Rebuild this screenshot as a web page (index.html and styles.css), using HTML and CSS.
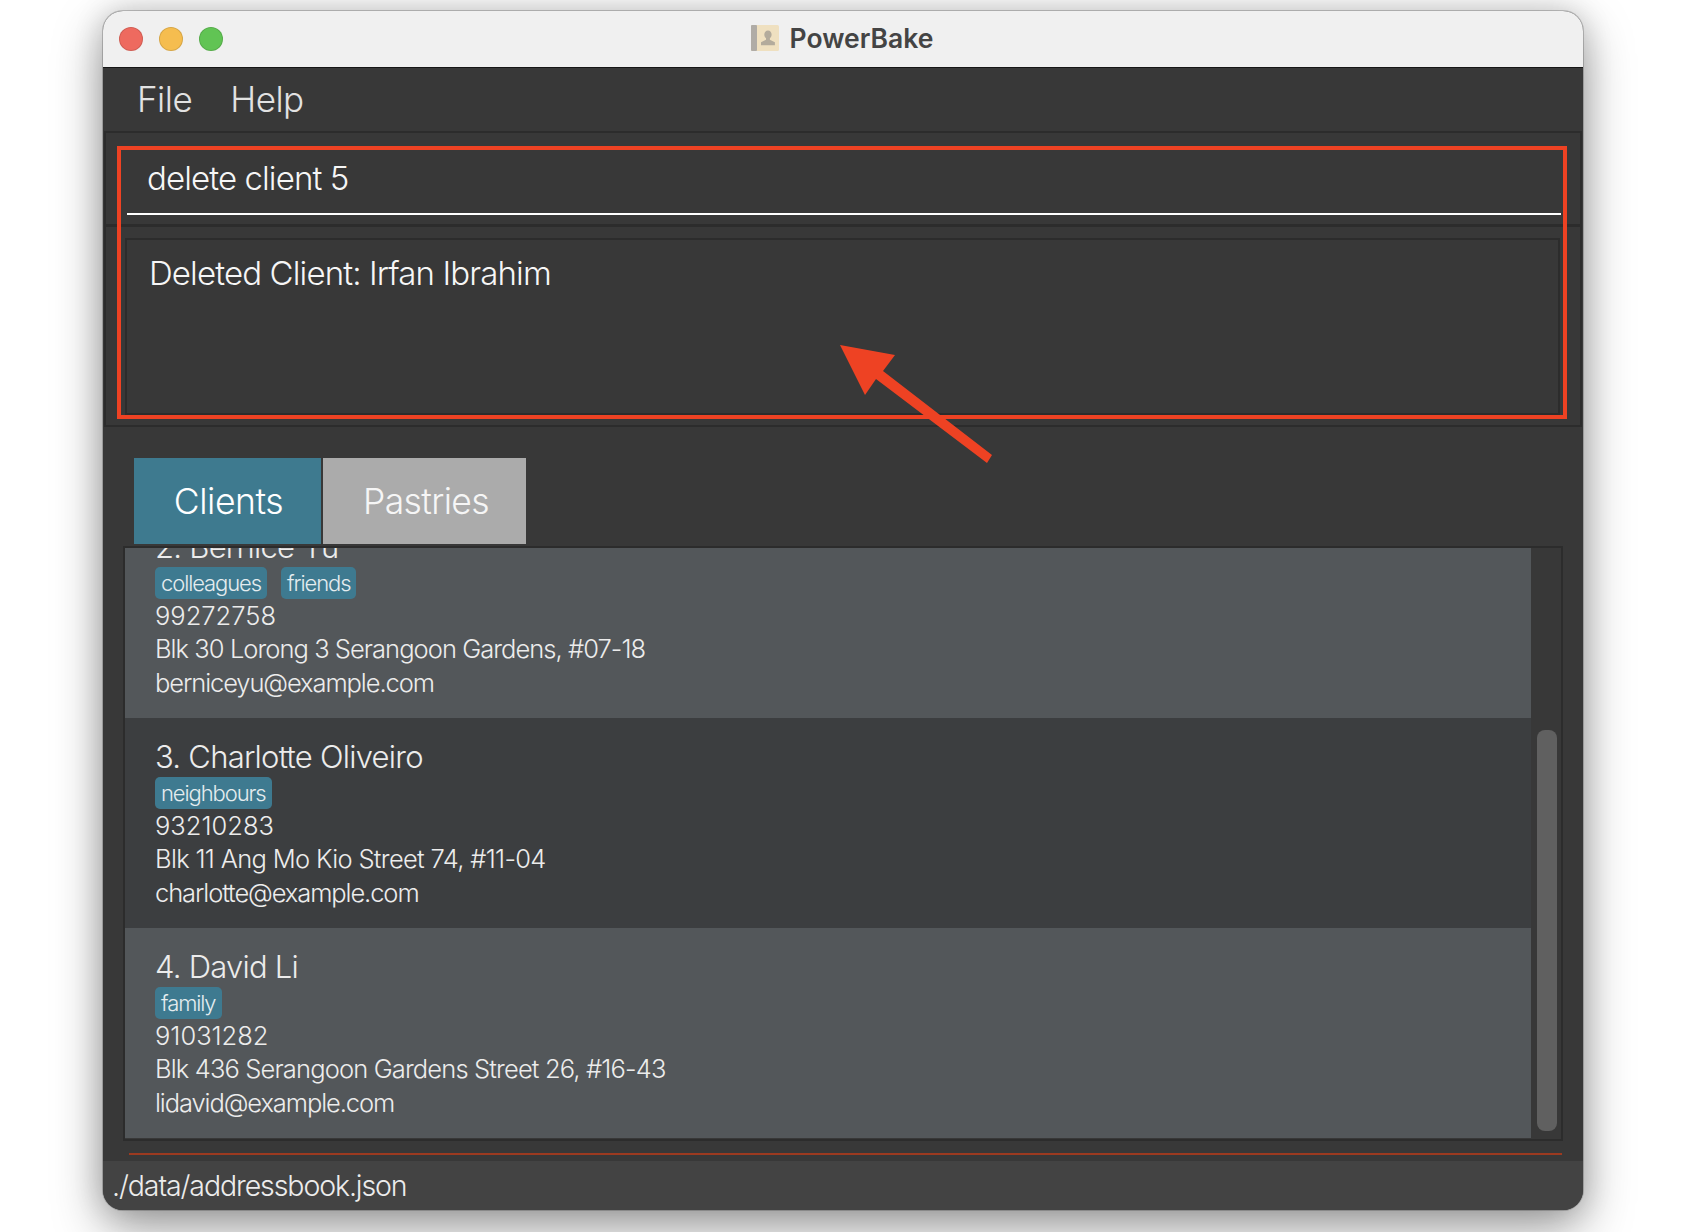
FILE: index.html
```html
<!DOCTYPE html>
<html lang="en">
<head>
<meta charset="utf-8">
<title>PowerBake</title>
<link rel="stylesheet" href="styles.css">
</head>
<body>
<div class="window">
  <header class="titlebar">
    <div class="lights">
      <span class="light light-red"></span>
      <span class="light light-yellow"></span>
      <span class="light light-green"></span>
    </div>
    <div class="title">
      <svg class="app-icon" width="28" height="26" viewBox="0 0 28 26">
        <rect x="0" y="0" width="28" height="26" rx="1.5" fill="#efe0c0"/>
        <rect x="0" y="0" width="6" height="26" rx="1" fill="#b0aca6"/>
        <path d="M17 5.5c2.2 0 3.6 1.8 3.6 4 0 1.6-.7 3-1.7 3.8v1.5l5 2.4v3H10v-3l5-2.4v-1.5c-1-.8-1.7-2.2-1.7-3.8 0-2.2 1.5-4 3.7-4z" fill="#b3ab9c"/>
      </svg>
      <span class="title-text">PowerBake</span>
    </div>
  </header>
  <nav class="menubar">
    <span class="menu-item">File</span>
    <span class="menu-item">Help</span>
  </nav>
  <section class="command">
    <div class="command-input">delete client 5</div>
  </section>
  <section class="result">
    <div class="result-box">Deleted Client: Irfan Ibrahim</div>
  </section>
  <main class="main">
    <div class="tabs">
      <div class="tab tab-active">Clients</div>
      <div class="tab tab-idle">Pastries</div>
    </div>
    <div class="list">
      <div class="rows">
        <article class="row row-light row-first">
          <div class="name">2. Bernice Yu</div>
          <div class="tags"><span class="tag">colleagues</span><span class="tag">friends</span></div>
          <div class="line phone">99272758</div>
          <div class="line address address-tight">Blk 30 Lorong 3 Serangoon Gardens, #07-18</div>
          <div class="line email">berniceyu@example.com</div>
        </article>
        <article class="row row-dark">
          <div class="name">3. Charlotte Oliveiro</div>
          <div class="tags"><span class="tag">neighbours</span></div>
          <div class="line phone">93210283</div>
          <div class="line address address-loose">Blk 11 Ang Mo Kio Street 74, #11-04</div>
          <div class="line email">charlotte@example.com</div>
        </article>
        <article class="row row-light">
          <div class="name">4. David Li</div>
          <div class="tags"><span class="tag">family</span></div>
          <div class="line phone">91031282</div>
          <div class="line address">Blk 436 Serangoon Gardens Street 26, #16-43</div>
          <div class="line email">lidavid@example.com</div>
        </article>
      </div>
      <div class="scrolltrack"><div class="thumb"></div></div>
    </div>
    <div class="redline"></div>
  </main>
  <footer class="status">./data/addressbook.json</footer>
  <div class="callout-box"></div>
  <svg class="callout-arrow" width="170" height="130" viewBox="0 0 170 130">
    <polygon points="0,0 55,10 43,26 152,110 147,118 36,34 25,50" fill="#ee4223"/>
  </svg>
</div>
</body>
</html>
```
FILE: styles.css
```css
* { box-sizing: border-box; }
html, body { margin: 0; padding: 0; background: #fff; }
body {
  width: 1688px;
  height: 1232px;
  overflow: hidden;
  padding: 11px 105px 22px 103px;
  font-family: Inter, "Noto Sans", sans-serif;
}
.window {
  position: relative;
  width: 1480px;
  height: 1199px;
  display: flex;
  flex-direction: column;
  background: #383838;
  border-radius: 20px;
  box-shadow: 0 0 0 1px rgba(60,60,60,.28), 0 18px 50px rgba(0,0,0,.38), 0 0 30px rgba(0,0,0,.16);
  overflow: hidden;
}
.titlebar {
  flex: none;
  height: 57px;
  background: #f0f0f0;
  border-bottom: 1px solid #161616;
  display: flex;
  align-items: center;
  justify-content: center;
  position: relative;
}
.lights {
  position: absolute;
  left: 16px;
  top: 16px;
  display: flex;
  gap: 16px;
}
.light {
  width: 24px;
  height: 24px;
  border-radius: 50%;
  border: 1px solid rgba(0,0,0,.12);
}
.light-red { background: #ee6a5f; }
.light-yellow { background: #f5bd4f; }
.light-green { background: #61c454; }
.title { display: flex; align-items: center; gap: 11px; padding: 0 2px 2px 0; }
.app-icon { display: block; }
.title-text { font-size: 26.5px; font-weight: 600; color: #444; line-height: 30px; }
.menubar {
  flex: none;
  height: 63px;
  display: flex;
  align-items: center;
  gap: 38px;
  padding: 0 34px 1px;
  font-size: 35px;
  letter-spacing: -.5px;
  color: #e2e2e2;
  font-weight: 350;
}
.command {
  flex: none;
  height: 96px;
  margin: 0 1px;
  border: 2px solid #2c2c2c;
  border-bottom-width: 3px;
  padding: 0 19px 0 21px;
}
.command-input {
  height: 82px;
  border-bottom: 2px solid #fff;
  padding: 24px 0 0 20px;
  font-size: 33px;
  font-weight: 340;
  letter-spacing: -.9px;
  line-height: 42px;
  color: #f6f6f6;
}
.result {
  flex: none;
  height: 200px;
  margin: 0 1px;
  border: 2px solid #2c2c2c;
  border-top: 0;
  padding: 11px 20px 10px 19px;
}
.result-box {
  height: 177px;
  border: 2px solid #2c2c2c;
  padding: 13px 0 0 22px;
  font-size: 33px;
  font-weight: 340;
  letter-spacing: -.87px;
  line-height: 40px;
  color: #f6f6f6;
}
.main {
  flex: 1;
  padding: 31px 20px 0;
  display: flex;
  flex-direction: column;
}
.tabs { flex: none; display: flex; gap: 2px; padding-left: 11px; height: 88px; padding-bottom: 2px; }
.tab {
  height: 86px;
  display: flex;
  align-items: center;
  justify-content: center;
  font-size: 35.5px;
  letter-spacing: -.45px;
  font-weight: 330;
  color: #fff;
}
.tab-active { width: 187px; background: #3e7a8f; padding-left: 2px; }
.tab-idle { width: 203px; background: #ababab; color: #f6f6f6; padding-left: 3px; letter-spacing: -.65px; }
.list {
  flex: none;
  height: 595px;
  border: 2px solid #2c2c2c;
  display: flex;
  overflow: hidden;
}
.rows { flex: 1; min-width: 0; }
.row { height: 210px; padding: 18px 0 0 30px; color: #ececec; }
.row-first { margin-top: -40px; }
.row-light { background: #53575a; }
.row-dark { background: #3c3e40; }
.name { font-size: 31px; letter-spacing: -.75px; line-height: 42px; font-weight: 300; height: 41px; }
.tags { display: flex; gap: 14px; height: 32px; }
.tag {
  background: #3e7a90;
  color: #e4ecef;
  border-radius: 5px;
  padding: 0 6px;
  font-size: 22px;
  letter-spacing: -1.1px;
  line-height: 32px;
  font-weight: 300;
}
.line { font-size: 25.5px; line-height: 34px; font-weight: 300; }
.phone { margin-bottom: -1px; }
.address { letter-spacing: -.85px; }
.address-tight { letter-spacing: -.95px; }
.address-loose { letter-spacing: -.67px; }
.email { letter-spacing: -1.1px; }
.scrolltrack { flex: none; width: 30px; padding: 182px 4px 8px 6px; background: #383838; }
.thumb { height: 100%; background: #606060; border-radius: 8px; }
.redline { flex: none; height: 2px; margin: 12px 1px 0 6px; background: #9c3a20; }
.status {
  flex: none;
  height: 49px;
  background: #434343;
  padding: 1px 0 0 9px;
  font-size: 28.5px;
  letter-spacing: -1.1px;
  line-height: 48px;
  color: #ececec;
  font-weight: 300;
}
.callout-box {
  position: absolute;
  left: 14px;
  top: 135px;
  width: 1450px;
  height: 273px;
  border: 4px solid #ee4223;
}
.callout-arrow {
  position: absolute;
  left: 737px;
  top: 334px;
}
```
